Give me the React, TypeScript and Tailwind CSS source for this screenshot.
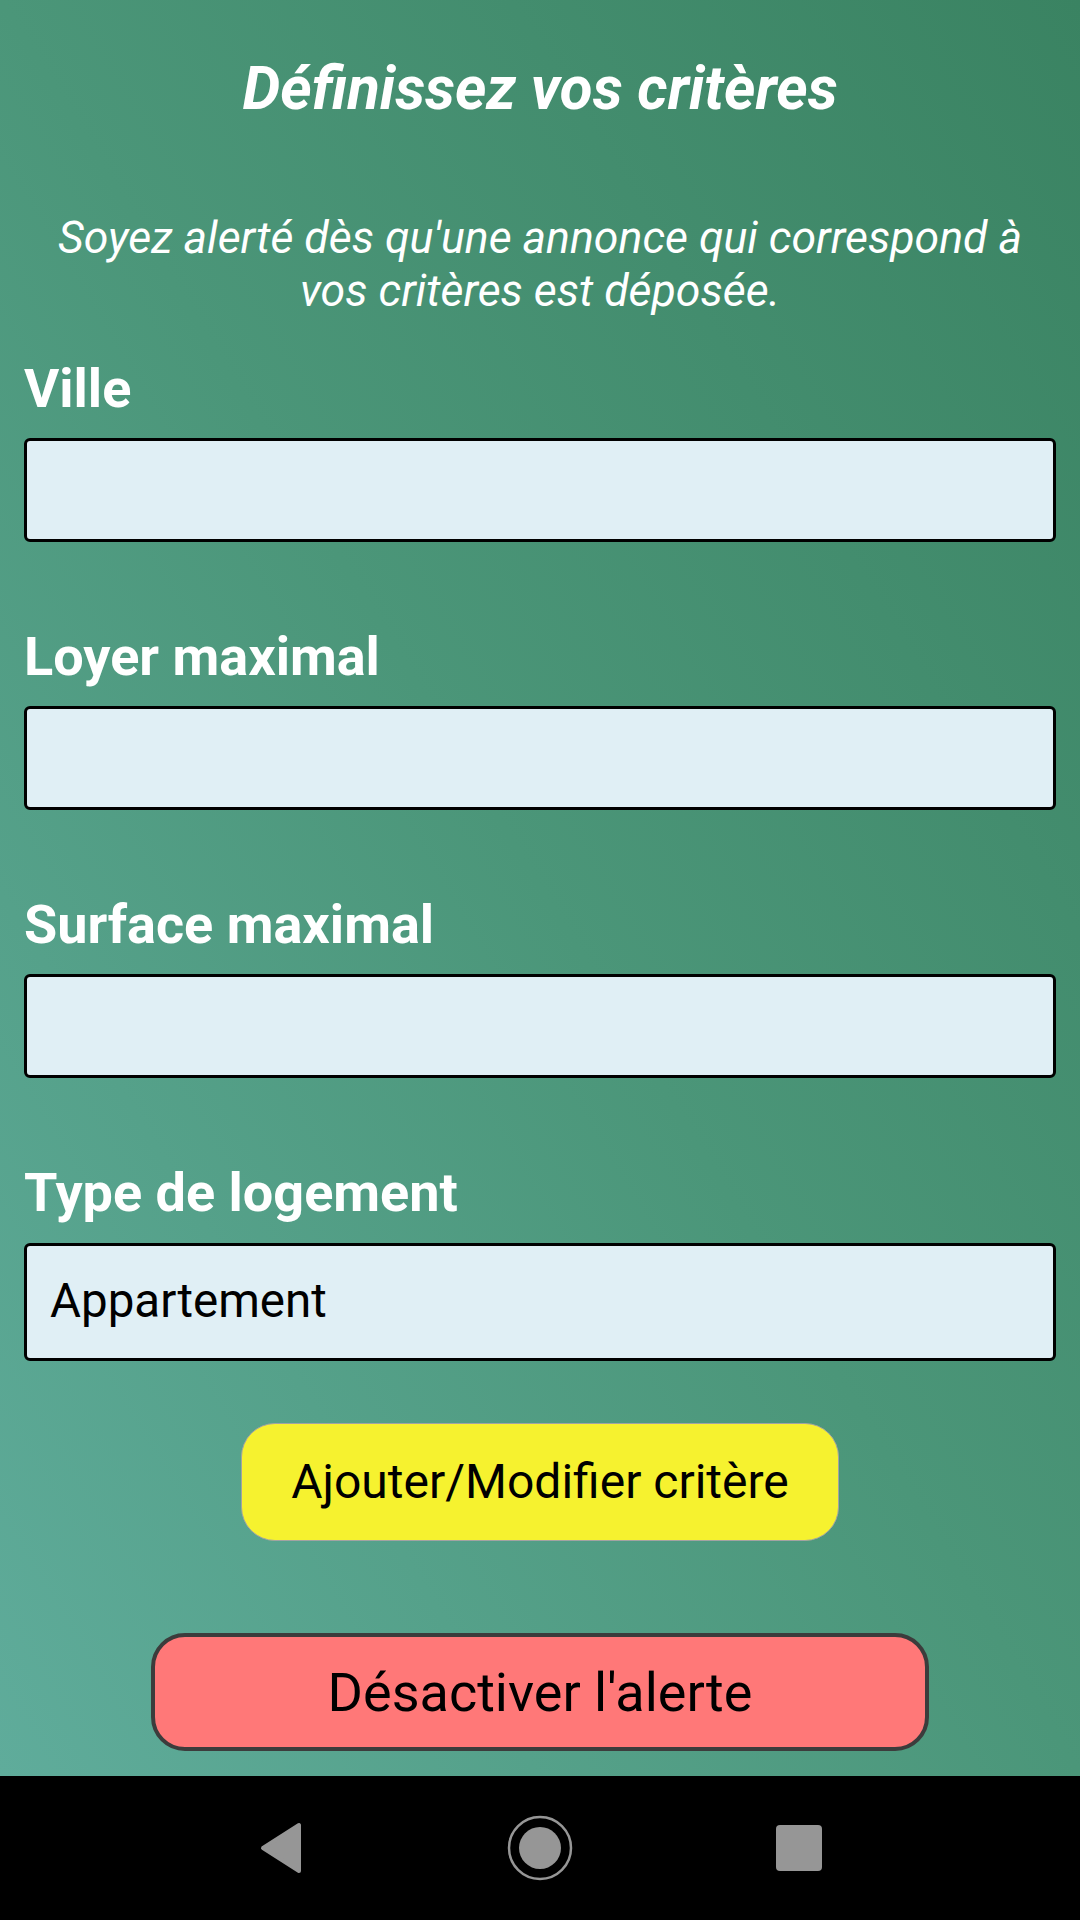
import React from 'react';

const fields = [
  { id: 'ville', label: 'Ville', value: '' },
  { id: 'loyer', label: 'Loyer maximal', value: '' },
  { id: 'surface', label: 'Surface maximal', value: '' },
];

const App: React.FC = () => {
  return (
    <div className="w-[1080px] h-[1920px] flex flex-col font-['Roboto',sans-serif]">
      <main className="h-[1776px] bg-linear-to-bl from-[#3a8362] via-[#4b9679] to-[#5fac9b] px-[24px] flex flex-col">
        {/* Header */}
        <h1 className="pt-[54px] text-center text-white font-bold italic text-[60px] leading-[70px]">
          Définissez vos critères
        </h1>
        <p className="mt-[88px] text-center text-white italic text-[44.6px] leading-[52.5px]">
          Soyez alerté dès qu'une annonce qui correspond à
          <br />
          vos critères est déposée.
        </p>

        {/* Form */}
        <div className="mt-[41px] flex flex-col gap-[84px]">
          {fields.map((field) => (
            <div key={field.id} className="flex flex-col">
              <label className="text-white font-bold text-[54px] leading-[62px]">{field.label}</label>
              <div className="mt-[18px] h-[104px] bg-[#e0eff5] border-[3px] border-black rounded-[6px]" />
            </div>
          ))}
          <div className="flex flex-col">
            <label className="text-white font-bold text-[54px] leading-[62px]">Type de logement</label>
            <div className="mt-[19px] h-[118px] bg-[#e0eff5] border-[3px] border-black rounded-[6px] flex items-center pl-[23px] text-black text-[47.5px]">
              Appartement
            </div>
          </div>
        </div>

        {/* Actions */}
        <button className="mt-[62px] mx-auto w-[598px] h-[118px] bg-[#f6f22f] border border-[#a3a3a3] rounded-[34px] text-black text-[48px]">
          Ajouter/Modifier critère
        </button>
        <button className="mt-[92px] mx-auto w-[778px] h-[118px] bg-[#ff7878] border-[4px] border-[#3c3c3c] rounded-[34px] text-black text-[54px]">
          Désactiver l'alerte
        </button>
      </main>

      {/* Android navigation bar */}
      <nav className="h-[144px] bg-black flex items-center justify-center">
        <div className="w-[777px] grid grid-cols-3 items-center">
          <div className="flex justify-center items-center">
            <svg width="44" height="52" viewBox="0 0 44 52">
              <path d="M40 3 L40 49 L4 26 Z" fill="#969696" stroke="#969696" strokeWidth="4" strokeLinejoin="round" />
            </svg>
          </div>
          <div className="flex justify-center items-center">
            <svg width="66" height="66" viewBox="0 0 66 66">
              <circle cx="33" cy="33" r="31" fill="none" stroke="#969696" strokeWidth="2.5" />
              <circle cx="33" cy="33" r="21" fill="#969696" />
            </svg>
          </div>
          <div className="flex justify-center items-center">
            <div className="w-[46px] h-[46px] bg-[#969696] rounded-[4px]" />
          </div>
        </div>
      </nav>
    </div>
  );
};

export default App;
